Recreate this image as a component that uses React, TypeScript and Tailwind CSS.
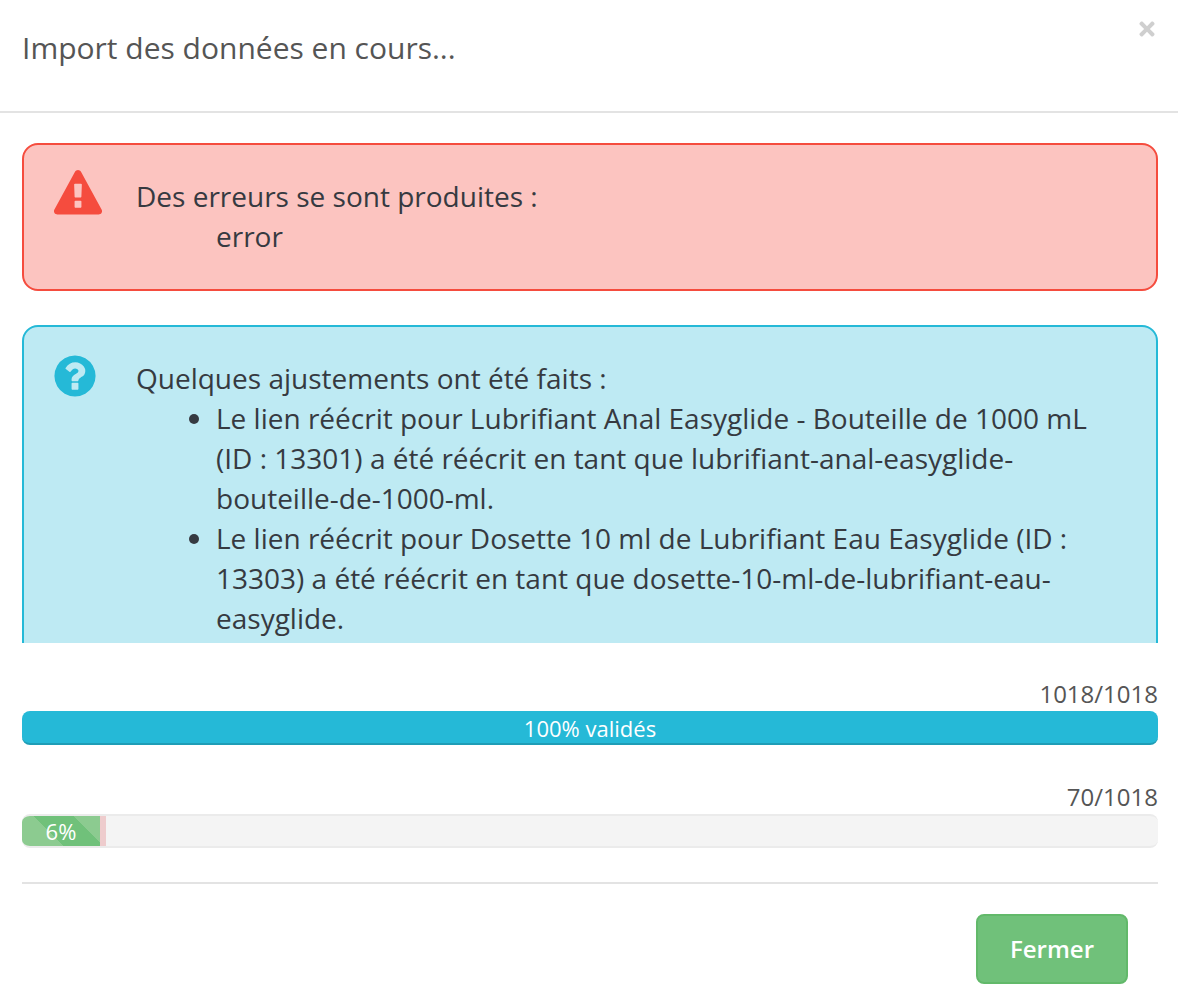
import { FaTimes } from "react-icons/fa";

const FONT = "font-['Open_Sans',sans-serif]";

// Font Awesome 4 shapes, the ones in react-icons are the rounder v5 drawings
const WARNING_PATH =
  "M1024 1375v-190q0-14-9.5-23.5t-22.5-9.5h-192q-13 0-22.5 9.5t-9.5 23.5v190q0 14 9.5 23.5t22.5 9.5h192q13 0 22.5-9.5t9.5-23.5zm-2-374l18-459q0-12-10-19-13-11-24-11h-220q-11 0-24 11-10 7-10 21l17 457q0 10 10 16.5t24 6.5h185q14 0 23.5-6.5t10.5-16.5zm-14-934l768 1408q35 63-2 126-17 29-46.5 46t-63.5 17h-1536q-34 0-63.5-17t-46.5-46q-37-63-2-126l768-1408q17-31 47-49t65-18 65 18 47 49z";
const QUESTION_PATH =
  "M1024 1376v-192q0-14-9-23t-23-9h-192q-14 0-23 9t-9 23v192q0 14 9 23t23 9h192q14 0 23-9t9-23zm256-672q0-88-55.5-163t-138.5-116-170-41q-243 0-371 213-15 24 8 42l132 100q7 6 19 6 16 0 25-12 53-68 86-92 34-24 86-24 48 0 85.5 26t37.5 59q0 38-20 61t-68 45q-63 28-115.5 86.5t-52.5 125.5v36q0 14 9 23t23 9h192q14 0 23-9t9-23q0-19 21.5-49.5t54.5-49.5q32-18 49-28.5t46-35 44.5-48 28-60.5 12.5-81zm384 192q0 209-103 385.5t-279.5 279.5-385.5 103-385.5-103-279.5-279.5-103-385.5 103-385.5 279.5-279.5 385.5-103 385.5 103 279.5 279.5 103 385.5z";

export default function App() {
  return (
    <div className={`${FONT} h-[1006px] w-[1178px] overflow-hidden bg-white text-[28px] leading-[40px] text-[#363a41]`}>
      {/* Header */}
      <div className="relative h-[113px] border-b-2 border-[#e3e3e3] pt-[25px] pl-[22px]">
        <h4 className="text-[30px] leading-[46px] font-normal text-[#555]">Import des données en cours...</h4>
        <FaTimes className="absolute top-[18px] right-[20px] h-[22px] w-[22px] text-[#cfcfcf]" />
      </div>

      {/* Messages */}
      <div className="mt-[30px] mr-[20px] ml-[22px] h-[500px] overflow-hidden">
        <div className="mb-[34px] flex h-[148px] rounded-[16px] border-2 border-[#f54c3e] bg-[#fcc4c0] pl-[30px]">
          <svg viewBox="0 0 1792 1792" className="mt-[25px] h-[48px] w-[48px] shrink-0 fill-[#f54c3e]">
            <path d={WARNING_PATH} />
          </svg>
          <div className="mt-[31px] ml-[34px]">
            <p>Des erreurs se sont produites :</p>
            <p className="pl-[80px]">error</p>
          </div>
        </div>

        <div className="flex rounded-t-[16px] border-2 border-[#25b9d7] bg-[#beeaf3] pr-[30px] pb-[40px] pl-[27px]">
          <svg viewBox="0 0 1792 1792" className="mt-[25px] h-[48px] w-[48px] shrink-0 fill-[#25b9d7]">
            <path d={QUESTION_PATH} />
          </svg>
          <div className="mt-[31px] ml-[37px]">
            <p>Quelques ajustements ont été faits :</p>
            <ul className="list-disc pl-[80px]">
              <li>Le lien réécrit pour Lubrifiant Anal Easyglide - Bouteille de 1000 mL (ID : 13301) a été réécrit en tant que lubrifiant-anal-easyglide-bouteille-de-1000-ml.</li>
              <li>Le lien réécrit pour Dosette 10 ml de Lubrifiant Eau Easyglide (ID : 13303) a été réécrit en tant que dosette-10-ml-de-lubrifiant-eau-easyglide.</li>
            </ul>
          </div>
        </div>
      </div>

      {/* Progress */}
      <div className="mt-[33px] mr-[20px] ml-[22px]">
        <div className="text-right text-[24px] leading-[36px] text-[#555]">1018/1018</div>
        <div className="mt-[-1px] h-[34px] rounded-[8px] border-b-2 border-[#1f9db6] bg-[#25b9d7] text-center text-[22px] leading-[34px] text-white">
          100% validés
        </div>

        <div className="mt-[34px] text-right text-[24px] leading-[36px] text-[#555]">70/1018</div>
        <div className="mt-[-1px] flex h-[34px] overflow-hidden rounded-[8px] border-t-2 border-b-2 border-[#ebebeb] bg-[#f4f4f4]">
          <div className="mt-[-2px] mb-[-2px] w-[78px] border-b-2 border-[#5f9d63] bg-[#8ccb90] bg-[linear-gradient(45deg,#70c17a_25%,transparent_25%,transparent_50%,#70c17a_50%,#70c17a_75%,transparent_75%)] bg-[length:80px_80px] bg-[position:10px_0] text-center text-[22px] leading-[34px] text-white">
            6%
          </div>
          <div className="mt-[-2px] mb-[-2px] w-[6px] bg-[#eecccd]" />
        </div>
      </div>

      {/* Footer */}
      <div className="mt-[34px] mr-[20px] ml-[22px] flex justify-end border-t-2 border-[#e3e3e3] pt-[30px] pr-[30px]">
        <button type="button" className="h-[70px] w-[152px] rounded-[8px] border-2 border-[#62b96a] bg-[#70c17a] text-[24px] font-semibold text-white">
          Fermer
        </button>
      </div>
    </div>
  );
}
